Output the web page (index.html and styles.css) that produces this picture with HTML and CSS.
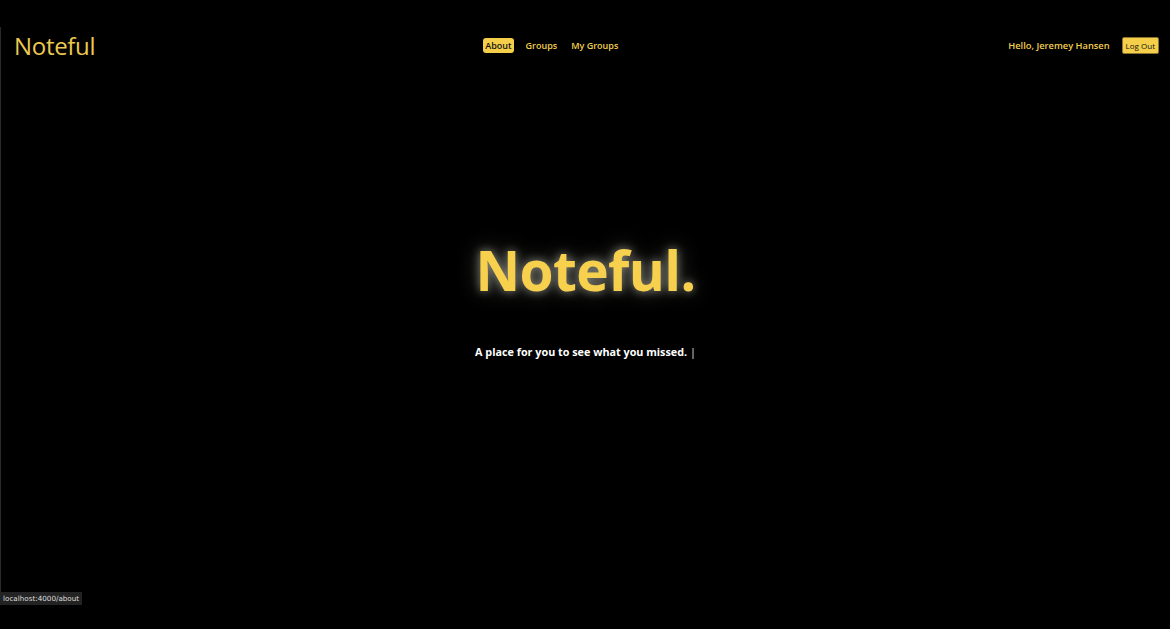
FILE: index.html
```html
<!DOCTYPE html>
<html lang="en">
<head>
<meta charset="utf-8">
<title>Noteful</title>
<link rel="stylesheet" href="styles.css">
</head>
<body>
<div class="app">
  <header class="topbar">
    <a class="logo" href="#">Noteful</a>
    <nav class="nav">
      <a class="nav-link active" href="#">About</a>
      <a class="nav-link" href="#">Groups</a>
      <a class="nav-link" href="#">My Groups</a>
    </nav>
    <div class="user">
      <span class="hello">Hello, Jeremey Hansen</span>
      <button class="logout">Log Out</button>
    </div>
  </header>
  <main class="hero">
    <h1 class="hero-title">Noteful.</h1>
    <p class="hero-sub">A place for you to see what you missed. <span class="caret">|</span></p>
  </main>
</div>
<div class="status">localhost:4000/about</div>
</body>
</html>
```
FILE: styles.css
```css
html, body {
  margin: 0;
  padding: 0;
  background: #000;
  height: 100%;
  overflow: hidden;
}
body {
  font-family: "Open Sans", "DejaVu Sans", sans-serif;
  color: #f2cd4f;
}
.app {
  margin-top: 27px;
  height: 568px;
  border-left: 1px solid #2a2a2a;
  display: flex;
  flex-direction: column;
}
.topbar {
  display: flex;
  align-items: center;
  justify-content: space-between;
  padding: 0 11px 0 13px;
  height: 37px;
}
.logo {
  font-size: 24px;
  font-weight: 500;
  color: #ecc94f;
  text-decoration: none;
  letter-spacing: -0.3px;
}
.nav {
  display: flex;
  align-items: center;
  gap: 10px;
}
.nav-link {
  font-size: 9px;
  font-weight: 600;
  color: #f2cd4f;
  text-decoration: none;
  padding: 2px 2px;
  border-radius: 3px;
  line-height: 11px;
}
.nav-link.active {
  background: #f5cf4a;
  color: #111;
}
.user {
  display: flex;
  align-items: center;
  gap: 12px;
}
.hello {
  font-size: 9.3px;
  font-weight: 600;
  color: #f2cd4f;
}
.logout {
  font-family: inherit;
  font-size: 8px;
  background: #f5cf4a;
  color: #111;
  border: 1px solid #8a7530;
  border-radius: 2px;
  padding: 3px 3px;
  line-height: 9px;
  height: 17px;
}
.hero {
  display: flex;
  flex-direction: column;
  align-items: center;
  padding-top: 171px;
}
.hero-title {
  margin: 0;
  font-size: 55px;
  font-weight: 700;
  letter-spacing: -0.6px;
  color: #f7d04d;
  line-height: 70px;
  text-shadow: 0 0 10px rgba(255, 255, 225, 0.5), 0 0 22px rgba(255, 255, 255, 0.3);
}
.hero-sub {
  margin: 39px 0 0;
  font-size: 10.8px;
  font-weight: 700;
  color: #fff;
}
.caret {
  font-weight: 400;
  color: #e6e6e6;
}
.status {
  position: fixed;
  left: 0;
  top: 592px;
  background: #232323;
  color: #ddd;
  font-family: "DejaVu Sans", sans-serif;
  font-size: 7.2px;
  padding: 1px 3px;
  line-height: 11px;
}
```
